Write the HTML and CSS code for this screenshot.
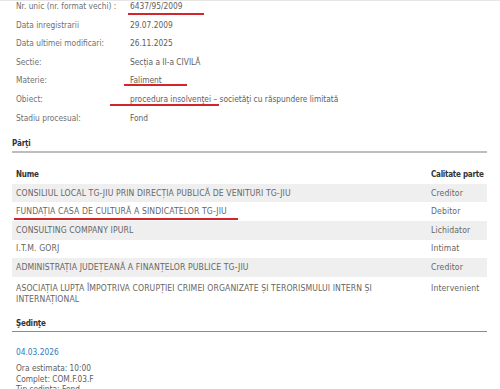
FILE: index.html
```html
<!DOCTYPE html>
<html lang="ro">
<head>
    <meta charset="UTF-8">
    <meta name="viewport" content="width=device-width, initial-scale=1.0">
    <title>Dosar 6437/95/2009</title>
    <link rel="stylesheet" href="styles.css">
</head>
<body>
    <div class="page">
        <div class="top-rule"></div>

        <!-- Detalii dosar -->
        <div class="case-info">
            <div class="info-row"><span class="info-label">Nr. unic (nr. format vechi) :</span><span class="info-value">6437/95/2009</span></div>
            <div class="info-row"><span class="info-label">Data inregistrarii</span><span class="info-value">29.07.2009</span></div>
            <div class="info-row"><span class="info-label">Data ultimei modificari:</span><span class="info-value">26.11.2025</span></div>
            <div class="info-row"><span class="info-label">Sectie:</span><span class="info-value">Secția a II-a CIVILĂ</span></div>
            <div class="info-row"><span class="info-label">Materie:</span><span class="info-value">Faliment</span></div>
            <div class="info-row"><span class="info-label">Obiect:</span><span class="info-value">procedura insolvenţei – societăţi cu răspundere limitată</span></div>
            <div class="info-row"><span class="info-label">Stadiu procesual:</span><span class="info-value">Fond</span></div>
        </div>

        <h2 class="section-title parti-title">Părţi</h2>

        <table class="parti-table">
            <colgroup>
                <col class="col-name">
                <col class="col-role">
            </colgroup>
            <thead>
                <tr><th>Nume</th><th>Calitate parte</th></tr>
            </thead>
            <tbody>
                <tr><td>CONSILIUL LOCAL TG-JIU PRIN DIRECȚIA PUBLICĂ DE VENITURI TG-JIU</td><td>Creditor</td></tr>
                <tr><td>FUNDAȚIA CASA DE CULTURĂ A SINDICATELOR TG-JIU</td><td>Debitor</td></tr>
                <tr><td>CONSULTING COMPANY IPURL</td><td>Lichidator</td></tr>
                <tr><td>I.T.M. GORJ</td><td>Intimat</td></tr>
                <tr><td>ADMINISTRAȚIA JUDEȚEANĂ A FINANȚELOR PUBLICE TG-JIU</td><td>Creditor</td></tr>
                <tr class="tall-row"><td>ASOCIAȚIA LUPTA ÎMPOTRIVA CORUPȚIEI CRIMEI ORGANIZATE ȘI TERORISMULUI INTERN ȘI INTERNAȚIONAL</td><td>Intervenient</td></tr>
            </tbody>
        </table>

        <h2 class="section-title sedinte-title">Şedinţe</h2>

        <div class="hearing">
            <div class="hearing-date">04.03.2026</div>
            <div class="hearing-details">
                Ora estimata: 10:00<br>
                Complet: COM.F.03.F<br>
                Tip sedinta: Fond
            </div>
        </div>

        <!-- marcaje rosii -->
        <div class="mark mark-nr"></div>
        <div class="mark mark-materie"></div>
        <div class="mark mark-obiect"></div>
        <div class="mark mark-debitor"></div>
    </div>
</body>
</html>
```

FILE: styles.css
```css
body {
    margin: 0;
    font-family: "DejaVu Sans Condensed", "DejaVu Sans", sans-serif;
    font-stretch: condensed;
    font-size: 8.3px;
    color: #666;
    background-color: #fff;
    overflow: hidden;
}

.page {
    position: relative;
    padding: 0 13px 0 12px;
}

.top-rule {
    height: 1px;
    margin: 0 -13px 0 -12px;
    background-color: #e6e6e6;
}

.case-info {
    margin-top: -4px;
}

.info-row {
    display: grid;
    grid-template-columns: 118px 1fr;
    height: 18.6px;
    line-height: 18.6px;
}

.info-label {
    padding-left: 4px;
    color: #707070;
}

.info-value {
    color: #5e5e5e;
}

.section-title {
    margin: 0;
    font-size: 8px;
    font-weight: bold;
    letter-spacing: -0.2px;
    line-height: 12px;
    color: #333;
}

.parti-title {
    margin-top: 10.5px;
    padding-bottom: 1px;
    border-bottom: 2px solid #bdbdbd;
}

.parti-table {
    width: 100%;
    margin-top: 12.5px;
    border-collapse: collapse;
    table-layout: fixed;
}

.col-name {
    width: 415px;
}

.parti-table th,
.parti-table td {
    height: 18.6px;
    padding: 0 4px;
    line-height: 11px;
    text-align: left;
    vertical-align: middle;
}

.parti-table th {
    font-size: 8px;
    font-weight: bold;
    letter-spacing: -0.25px;
    color: #333;
    white-space: nowrap;
}

.parti-table td {
    font-size: 8.6px;
    letter-spacing: 0.1px;
}

.parti-table tbody tr:nth-child(odd) {
    background-color: #efefef;
}

.parti-table .tall-row td {
    padding: 6px 4px 7px;
    vertical-align: top;
}

.sedinte-title {
    margin-top: 6.5px;
    padding-left: 4px;
    padding-bottom: 1px;
    border-bottom: 1px solid #8a8a8a;
}

.hearing {
    padding-left: 4px;
}

.hearing-date {
    margin-top: 14px;
    line-height: 12px;
    color: #2f7db8;
}

.hearing-details {
    margin-top: 5px;
    line-height: 10.5px;
    color: #5e5e5e;
}

.mark {
    position: absolute;
    height: 2px;
    background-color: #d3262c;
}

.mark-nr {
    left: 128px;
    top: 12.5px;
    width: 76px;
}

.mark-materie {
    left: 124px;
    top: 84px;
    width: 63px;
}

.mark-obiect {
    left: 110px;
    top: 104px;
    width: 109px;
}

.mark-debitor {
    left: 14px;
    top: 218px;
    width: 224px;
}
```
